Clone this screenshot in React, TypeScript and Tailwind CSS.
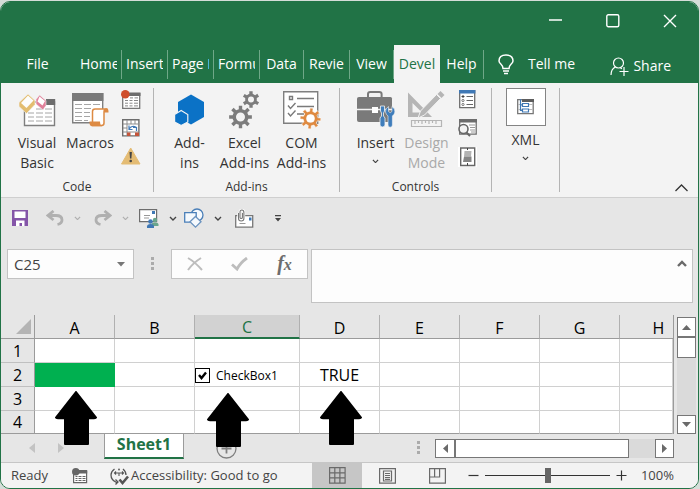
import React, { useState } from "react";
import { clsx } from "clsx";

// label is what is left of the name when the window is this narrow
const TABS = [
  { name: "Home", label: "Home", width: "w-[46px]" },
  { name: "Insert", label: "Insert", width: "w-[46px]" },
  { name: "Page Layout", label: "Page L", width: "w-[46px]" },
  { name: "Formulas", label: "Formu", width: "w-[46px]" },
  { name: "Data", label: "Data", width: "w-[44px]" },
  { name: "Review", label: "Revie", width: "w-[46px]" },
  { name: "View", label: "View", width: "w-[44px]" },
  { name: "Developer", label: "Devel", width: "w-[46px]" },
  { name: "Help", label: "Help", width: "w-[44px]" },
];

const COLUMNS = ["A", "B", "C", "D", "E", "F", "G", "H"];

function Chevron({ color = "#444", size = 8 }: { color?: string; size?: number }) {
  return (
    <svg width={size} height={size / 2 + 1} viewBox="0 0 8 5" fill="none" stroke={color} strokeWidth="1.4">
      <path d="M1 1l3 3 3-3" />
    </svg>
  );
}

function Dots() {
  return (
    <svg width="3" height="14" viewBox="0 0 3 14" fill="#ababab">
      <path d="M0 0h3v3H0zM0 5h3v3H0zM0 10h3v3H0z" />
    </svg>
  );
}

function gearPath(cx: number, cy: number, r: number, hole: number, teeth: number, turn = 0) {
  const inner = r * 0.7;
  const step = (Math.PI * 2) / teeth;
  const pts: string[] = [];
  for (let i = 0; i < teeth; i++) {
    const a = i * step + turn;
    [
      [inner, -0.27],
      [r, -0.19],
      [r, 0.19],
      [inner, 0.27],
    ].forEach(([rad, k]) => {
      pts.push(
        `${(cx + rad * Math.cos(a + k * step)).toFixed(2)} ${(cy + rad * Math.sin(a + k * step)).toFixed(2)}`
      );
    });
  }
  return `M${pts.join("L")}ZM${cx - hole} ${cy}a${hole} ${hole} 0 1 0 ${hole * 2} 0a${hole} ${hole} 0 1 0 ${-hole * 2} 0Z`;
}

/* ---- ribbon icons ---- */

function VisualBasicIcon() {
  return (
    <svg width="37" height="34" viewBox="0 0 37 34">
      <path d="M5.5 9h30v23.5h-30z" fill="#fff" stroke="#7f7f7f" strokeWidth="1.4" />
      <path d="M27 6h9.2v6H27z" fill="#6d6d6d" />
      <path
        d="M9 20h6m2 0h7m2 0h7M9 24h6m2 0h7m2 0h7M9 28h6m2 0h7m2 0h7M17 16h7m2 0h7"
        stroke="#a6a6a6"
        fill="none"
      />
      <path d="M9 1l7 6.5v4L7.5 20.500 0 13.5v-4z" fill="#e3bd6f" stroke="#f3f3f3" strokeWidth=".6" />
      <path d="M9 2.5l5.500 5-7 7.5-5.500-5z" fill="#fdfdfb" />
      <path d="M20.500 2l6.500 5.500v5L24 17l-7-6V6.500z" fill="#e0809a" stroke="#f3f3f3" strokeWidth=".6" />
      <path d="M20.500 3.500L26 8l-2.500 4.500-5-4z" fill="#fff" />
    </svg>
  );
}

function MacrosIcon() {
  return (
    <svg width="37" height="34" viewBox="0 0 37 34">
      <path d="M.7.7h30v29H.7z" fill="#fff" stroke="#7f7f7f" strokeWidth="1.4" />
      <path d="M0 0h31.4v8H0z" fill="#7a7a7a" />
      <path
        d="M3 11.500h7m2 0h7m2 0h7M3 15.500h7m2 0h7M3 19.500h7m2 0h6M3 23.500h7m2 0h6M3 27.500h7m2 0h4"
        stroke="#a6a6a6"
        fill="none"
      />
      <path d="M20.500 29V18.500q0-2.500 2.500-2.500h11q-2 .5-2 3v11q0 2.500-2.500 2.500H20" fill="#fff" stroke="#dd8a43" strokeWidth="1.5" />
      <path d="M32 19.500v-2q.5-2.500 2.500-2.500t2 4.500z" fill="#dd8a43" />
      <path d="M17.500 28.500H28q0 4 2.500 4.700H20q-2.700 0-2.500-4.700z" fill="#dd8a43" />
    </svg>
  );
}

function RecordIcon() {
  return (
    <svg width="20" height="19" viewBox="0 0 20 19">
      <path d="M1.7 3.700h17v14.600h-17z" fill="#fff" stroke="#777" strokeWidth="1.3" />
      <path d="M8 2.500h11.500v3.500H8z" fill="#6d6d6d" />
      <path d="M4 10.500h3m1.500 0h3m1.500 0h4M4 13.200h3m1.500 0h3m1.500 0h4M4 15.900h3m1.500 0h3m1.500 0h4M9 7.900h3m1.500 0h3.500" stroke="#888" />
      <circle cx="4.3" cy="4.3" r="4.3" fill="#cf4f2c" />
    </svg>
  );
}

function RelativeIcon() {
  return (
    <svg width="18" height="18" viewBox="0 0 18 18">
      <path d="M.7.7h16.200v16.200H.7z" fill="#fff" stroke="#6d6d6d" strokeWidth="1.4" />
      <path d="M5 1v16M9 1v4M13 1v4M1 5h16M1 9h4M1 13h16" stroke="#8d8d8d" />
      <path d="M5 13.500h3.500V17H5zM13 13.500h4V17h-4z" fill="#c4553b" />
      <path d="M7 10q3-4.500 7.500-1.500M7 6.500V10.500h3.500M14.500 12V8.500H11" fill="none" stroke="#3f78b5" strokeWidth="1.2" />
    </svg>
  );
}

function WarningIcon() {
  return (
    <svg width="20" height="18" viewBox="0 0 20 18">
      <path d="M9.700 1L19 17H.5z" fill="#e4bc74" stroke="#e4bc74" strokeLinejoin="round" />
      <path d="M8.500 5h2.400l-.5 6.500H9z" fill="#444" />
      <circle cx="9.7" cy="14" r="1.3" fill="#444" />
    </svg>
  );
}

function AddinsIcon() {
  return (
    <svg width="31" height="32" viewBox="0 0 31 32" fill="#0b72c6">
      <path d="M17 .5l13 7.400v15L17 30.500 4 22.900v-15z" />
      <path d="M7.200 16.500l6.600 4v7.500l-6.600 3.500-6.600-3.500v-7.500z" stroke="#f3f3f3" strokeWidth="1.2" />
    </svg>
  );
}

function GearsIcon() {
  return (
    <svg width="31" height="38" viewBox="0 0 31 38" fill="#7c7c7c" fillRule="evenodd">
      <path d={gearPath(22, 8.5, 8.5, 3, 6, 0.52)} />
      <path d={gearPath(11.5, 26, 11.5, 4.5, 8)} />
    </svg>
  );
}

function ComIcon() {
  return (
    <svg width="38" height="38" viewBox="0 0 38 38">
      <path d="M.7.7h34v31.500H.7z" fill="#fff" stroke="#7f7f7f" strokeWidth="1.4" />
      <path
        d="M6.500 5.500h3v3h-3zM14 7.500h17M14 15.500h17M14 23h7M5 14.500l2.500 3 5-5.500M5 22l2.500 3 5-5.500"
        fill="none"
        stroke="#7a7a7a"
        strokeWidth="1.4"
      />
      <path d={gearPath(27.5, 27.5, 10.5, 4, 8, 0.1)} fill="#df8a41" stroke="#fff" strokeWidth=".6" fillRule="evenodd" />
    </svg>
  );
}

function ToolboxIcon() {
  return (
    <svg width="38" height="37" viewBox="0 0 38 37">
      <path d="M11 6V3q0-2 2.300-2h9Q24.600 1 24.600 3v3" fill="none" stroke="#7a7a7a" strokeWidth="2" />
      <path d="M2 6h31.500q1.500 0 1.500 1.500V29q0 2-2 2H2q-2 0-2-2V7.500Q0 6 2 6z" fill="#7a7a7a" />
      <path d="M0 18.500h35" stroke="#f3f3f3" strokeWidth="1.3" />
      <path d="M15 16h6v6h-6z" fill="#fff" />
      <path d="M23.500 15v5l1 2v3l-1.500 2v7q0 2 2.500 2t2.500-2v-7l-1.500-2v-3l1-2v-5z" fill="#3f7dbb" stroke="#f3f3f3" strokeWidth=".8" />
      <path
        d="M31.500 15.500q-3.500 2-3 5.500.5 2.500 2.500 4v9q0 2.200 2.200 2.200t2.200-2.200v-9q2.200-1.500 2.500-4 .3-3.500-3-5.500v5l-1.700 1.200-1.700-1.200z"
        fill="#3f7dbb"
        stroke="#f3f3f3"
        strokeWidth=".6"
      />
    </svg>
  );
}

function DesignIcon() {
  return (
    <svg width="37" height="37" viewBox="0 0 37 37" fill="#b5b5b5">
      <path d="M0 1.500L24 26H0zM4.500 12v9.500h9.500z" fillRule="evenodd" />
      <path d="M28.500 3.500l4 4L16.500 24l-6.500 3 2.500-7z" stroke="#f3f3f3" strokeWidth="1" />
      <path d="M32.500 0l4 4-3 3-4-4z" />
      <path d="M3.500 29.500h30v6h-30zM7 30v3M10.500 30v2M14 30v3M17.500 30v2M21 30v3M24.500 30v2M28 30v3" fill="none" stroke="#b5b5b5" strokeWidth="1.2" />
    </svg>
  );
}

function PropertiesIcon() {
  return (
    <svg width="17" height="19" viewBox="0 0 17 19">
      <path d="M.7.7h15v17H.7z" fill="#fff" stroke="#6d6d6d" strokeWidth="1.3" />
      <path d="M0 0h16.400v3.500H0z" fill="#3f78b5" />
      <path d="M7.500 6.500H14M7.500 10.500H14M7.500 14.500H14" stroke="#666" />
      <path d="M4 5v3M2.500 6.500h3" stroke="#444" />
      <circle cx="4" cy="10.5" r="1.1" fill="none" stroke="#777" />
      <circle cx="4" cy="14.5" r="1.1" fill="none" stroke="#777" />
    </svg>
  );
}

function ViewCodeIcon() {
  return (
    <svg width="20" height="18" viewBox="0 0 20 18">
      <path d="M1.7.7h16.500v14.500H1.7z" fill="#fff" stroke="#6d6d6d" strokeWidth="1.3" />
      <path d="M1 0h18v3.500H1z" fill="#6d6d6d" />
      <path d="M11 6h6M12 8.500h5M12 11h5M13 13h4" stroke="#999" />
      <circle cx="5.5" cy="10" r="4.5" fill="#f3f3f3" stroke="#666" strokeWidth="1.6" />
      <path d="M8.500 13.500l3.500 3.500" stroke="#666" strokeWidth="2" />
    </svg>
  );
}

function DialogIcon() {
  return (
    <svg width="19" height="20" viewBox="0 0 19 20">
      <path d="M0 0h19v20H0z" fill="#fff" />
      <path d="M2.700 1h14v17.500h-14z" fill="#fff" stroke="#666" strokeWidth="1.4" />
      <path d="M6.500 4h7l-.5 5.500H6z" fill="#b3b3b3" />
      <path d="M6 9.500h7.500v5.500H5z" fill="#858585" />
      <path d="M9.500 1v2M9.500 16v2.500" stroke="#444" />
    </svg>
  );
}

function XmlIcon() {
  return (
    <svg width="17" height="16" viewBox="0 0 17 16">
      <path d="M.7.7h15.500v14H.7z" fill="#fff" stroke="#777" strokeWidth="1.3" />
      <path d="M5 0h12v3H5z" fill="#5d5d5d" />
      <path d="M1 5.500h15M1 10.500h15" stroke="#bbb" />
      <path d="M3.500 0v11.500h2M3.500 6h2" fill="none" stroke="#3f78b5" strokeWidth="1.2" />
      <path d="M5.500 4.500h6v3h-6zM5.500 10h6v3h-6z" fill="#fff" stroke="#3f78b5" strokeWidth="1.2" />
    </svg>
  );
}

function RibbonButton({
  icon,
  lines,
  width,
  disabled,
  menu,
}: {
  icon: React.ReactNode;
  lines: string[];
  width: string;
  disabled?: boolean;
  menu?: boolean;
}) {
  return (
    <button
      disabled={disabled}
      className={clsx("flex flex-col items-center text-sm leading-5", width, disabled && "text-[#a9a9a9]")}
    >
      <span className="mb-0.5 flex h-[43px] items-center justify-center">{icon}</span>
      {lines.map((l) => (
        <span key={l} className="whitespace-nowrap">
          {l}
        </span>
      ))}
      {menu && (
        <span className="flex h-4 items-center">
          <Chevron size={7} />
        </span>
      )}
    </button>
  );
}

function SmallIcons({ items }: { items: { label: string; icon: React.ReactNode }[] }) {
  return (
    <div className="ml-0.5 flex w-6 flex-col items-center gap-2.5 pt-0.5">
      {items.map((i) => (
        <button key={i.label} aria-label={i.label}>
          {i.icon}
        </button>
      ))}
    </div>
  );
}

function RibbonGroup({
  title,
  width,
  children,
}: {
  title?: string;
  width: string;
  children: React.ReactNode;
}) {
  return (
    <section aria-label={title || "XML"} className={clsx("flex flex-col border-r border-[#b4b4b4]", width)}>
      <div className="flex h-[85px] justify-center">{children}</div>
      {title && <p className="pt-[9px] text-center text-xs leading-[10px]">{title}</p>}
    </section>
  );
}

function Ribbon() {
  return (
    <div className="flex border-b border-[#cfcfcf] bg-[#f3f3f3] py-[5px]">
      <RibbonGroup title="Code" width="w-[153px]">
        <RibbonButton icon={<VisualBasicIcon />} lines={["Visual", "Basic"]} width="w-[52px]" />
        <RibbonButton icon={<MacrosIcon />} lines={["Macros"]} width="w-[54px]" />
        <SmallIcons
          items={[
            { label: "Record Macro", icon: <RecordIcon /> },
            { label: "Use Relative References", icon: <RelativeIcon /> },
            { label: "Macro Security", icon: <WarningIcon /> },
          ]}
        />
      </RibbonGroup>
      <RibbonGroup title="Add-ins" width="w-[186px]">
        <RibbonButton icon={<AddinsIcon />} lines={["Add-", "ins"]} width="w-[54px]" />
        <RibbonButton icon={<GearsIcon />} lines={["Excel", "Add-ins"]} width="w-[56px]" />
        <RibbonButton icon={<ComIcon />} lines={["COM", "Add-ins"]} width="w-[58px]" />
      </RibbonGroup>
      <RibbonGroup title="Controls" width="w-[152px]">
        <RibbonButton icon={<ToolboxIcon />} lines={["Insert"]} width="w-[48px]" menu />
        <RibbonButton icon={<DesignIcon />} lines={["Design", "Mode"]} width="w-[54px]" disabled />
        <SmallIcons
          items={[
            { label: "Properties", icon: <PropertiesIcon /> },
            { label: "View Code", icon: <ViewCodeIcon /> },
            { label: "Run Dialog", icon: <DialogIcon /> },
          ]}
        />
      </RibbonGroup>
      <RibbonGroup width="w-[68px]">
        <button className="flex flex-col items-center self-start text-sm leading-5">
          <span className="mb-1 flex h-[38px] w-10 items-center justify-center border border-[#848484] bg-white">
            <XmlIcon />
          </span>
          XML
          <span className="flex h-4 items-center">
            <Chevron size={7} />
          </span>
        </button>
      </RibbonGroup>
      <button aria-label="Collapse the Ribbon" className="mr-2.5 ml-auto self-end">
        <svg width="13" height="8" viewBox="0 0 13 8" fill="none" stroke="#333" strokeWidth="1.3">
          <path d="M.5 7l6-6 6 6" />
        </svg>
      </button>
    </div>
  );
}

function QuickAccess() {
  return (
    <div className="flex h-10 items-center pl-[11px]">
      <button aria-label="Save" className="w-[34px]">
        <svg width="16" height="16" viewBox="0 0 16 16">
          <path d="M0 0h16v16H0z" fill="#8455a8" />
          <path d="M2.500 1.500h11v6.500h-11zM4 10.500h8.500V16H10v-3H7.500v3H4z" fill="#fff" />
        </svg>
      </button>
      <button aria-label="Undo" className="flex w-[48px] items-center gap-2.5" disabled>
        <svg width="18" height="16" viewBox="0 0 18 16" fill="none" stroke="#b0b0b0" strokeWidth="2.8">
          <path d="M7.500 1L2 5.500 7.500 10M2 5.500h8q6 0 6 4.500 0 3.500-4.500 4.500" />
        </svg>
        <Chevron color="#b0b0b0" size={7} />
      </button>
      <button aria-label="Redo" className="flex w-[45px] items-center gap-2.5" disabled>
        <svg width="18" height="16" viewBox="0 0 18 16" fill="none" stroke="#b0b0b0" strokeWidth="2.8">
          <path d="M10.500 1L16 5.500 10.500 10M16 5.500H8q-6 0-6 4.500 0 3.500 4.500 4.500" />
        </svg>
        <Chevron color="#b0b0b0" size={7} />
      </button>
      <button aria-label="Mail" className="flex w-[45px] items-center gap-2.5">
        <svg width="20" height="20" viewBox="0 0 20 20">
          <path d="M.6 1.600h17v12H.6z" fill="#fff" stroke="#6d6d6d" strokeWidth="1.2" />
          <path d="M13 3h3v3h-3z" fill="#3f78b5" />
          <path d="M5 7.500h6M5 10h5" stroke="#999" />
          <circle cx="16" cy="12" r="2.2" fill="#6aa58c" />
          <path d="M12.500 18v-1.500q0-2 3.500-2t3.500 2V18z" fill="#6aa58c" />
          <circle cx="11.5" cy="13.5" r="2.3" fill="#3f78b5" />
          <path d="M8 20v-1.500q0-2.500 3.500-2.500t3.500 2.500V20z" fill="#3f78b5" />
        </svg>
        <Chevron />
      </button>
      <button aria-label="Shapes" className="flex w-[51px] items-center gap-2.5">
        <svg width="20" height="20" viewBox="0 0 20 20" fill="#f5f9fd" stroke="#4a7fb8" strokeWidth="1.3">
          <circle cx="13" cy="7" r="6" />
          <path d="M.7 4.700h11.500v9.500H.7z" />
          <path d="M11.500 8.500l5.500 5.300-5.500 5.300-5.500-5.300z" stroke="#6b93bf" />
        </svg>
        <Chevron />
      </button>
      <button aria-label="Attach" className="w-10">
        <svg width="19" height="19" viewBox="0 0 19 19" fill="none">
          <path d="M.7 6.700h17v11.500H.7z" fill="#fff" stroke="#777" strokeWidth="1.3" />
          <path d="M14 8.500h2.500v3H14z" fill="#3f78b5" />
          <path d="M4.500 14.500h6" stroke="#999" />
          <path d="M3.500 4v5.500q0 2.500 2.700 2.500t2.700-2.500V3.500Q8.900 1 6.900 1T5 3.500v5q0 1 1.200 1t1.200-1V4" stroke="#fff" strokeWidth="2.6" />
          <path d="M3.500 4v5.500q0 2.500 2.700 2.500t2.700-2.500V3.500Q8.900 1 6.900 1T5 3.500v5q0 1 1.200 1t1.200-1V4" stroke="#777" strokeWidth="1.1" />
        </svg>
      </button>
      <button aria-label="Customize Quick Access Toolbar">
        <svg width="6" height="7" viewBox="0 0 6 7" fill="#444">
          <path d="M0 0h6v1.200H0zM0 3h6L3 6.500z" />
        </svg>
      </button>
    </div>
  );
}

function FormulaBar() {
  return (
    <div className="flex items-start pt-[11px] pr-[5px] pb-3 pl-1.5">
      <div className="flex h-[30px] w-[127px] items-center border border-[#c3c3c3] bg-[#fdfdfd] pr-2">
        <input
          aria-label="Name Box"
          defaultValue="C25"
          className="w-full min-w-0 bg-transparent pl-1.5 text-[15px] text-[#444] outline-none"
        />
        <button aria-label="Open names">
          <svg width="8" height="5" viewBox="0 0 8 5" fill="#777">
            <path d="M0 0h8L4 4.500z" />
          </svg>
        </button>
      </div>
      <div className="flex h-[30px] w-[37px] items-center justify-center">
        <Dots />
      </div>
      <div className="mr-[3px] grid h-[30px] w-[137px] grid-cols-3 place-items-center border border-[#c3c3c3] bg-[#fdfdfd]">
        <button aria-label="Cancel">
          <svg width="16" height="14" viewBox="0 0 16 14" fill="none" stroke="#bdbdbd" strokeWidth="2">
            <path d="M1 1q7 4 14 12M14 1Q6 6 1 13" />
          </svg>
        </button>
        <button aria-label="Enter">
          <svg width="17" height="14" viewBox="0 0 17 14" fill="none" stroke="#bdbdbd" strokeWidth="2.8">
            <path d="M1 7.500l5 4.500Q9 6 16 1" />
          </svg>
        </button>
        <button
          aria-label="Insert Function"
          className="font-['Liberation_Serif',serif] text-xl leading-6 font-bold text-[#6d6d6d] italic"
        >
          f<span className="text-base">x</span>
        </button>
      </div>
      <div className="flex h-[54px] flex-1 items-start border border-[#c3c3c3] bg-[#fdfdfd] pr-[5px]">
        <textarea aria-label="Formula Bar" className="h-full flex-1 resize-none p-1 text-sm outline-none" />
        <button aria-label="Collapse Formula Bar" className="mt-2.5">
          <svg width="10" height="7" viewBox="0 0 10 7" fill="none" stroke="#6a6a6a" strokeWidth="2.4">
            <path d="M1 6l4-4 4 4" />
          </svg>
        </button>
      </div>
    </div>
  );
}

function Arrow({ className }: { className: string }) {
  return (
    <svg width="42" height="54" viewBox="0 0 42 54" className={clsx("absolute z-10", className)} fill="#000" stroke="#000" strokeWidth="2" strokeLinejoin="round">
      <path d="M21 1l20 25.500q-1 1-3 .7h-5V53H10V27.200H4q-2 .3-3-.7z" />
    </svg>
  );
}

function Grid() {
  const [checked, setChecked] = useState(true);
  const cell = "border-r border-b border-[#d0d0d0] p-0";
  return (
    <div className="flex pr-0.5">
      <table className="flex-1 table-fixed border-separate border-spacing-0 border-r border-[#9b9b9b] bg-white text-base leading-5 text-black">
        <colgroup>
          <col className="w-[34px]" />
          <col className="w-20" />
          <col className="w-20" />
          <col className="w-[105px]" />
          <col className="w-20" />
          <col className="w-20" />
          <col className="w-20" />
          <col className="w-20" />
          <col />
        </colgroup>
        <thead>
          <tr className="h-6 bg-[#e6e6e6]">
            <th className="border-r border-b border-[#9b9b9b] p-0">
              <svg className="mr-[3px] ml-auto" width="15" height="15" viewBox="0 0 15 15" fill="#b4b4b4">
                <path d="M15 0v15H0z" />
              </svg>
            </th>
            {COLUMNS.map((c) => (
              <th
                key={c}
                className={clsx(
                  "p-0 pt-0.5 font-normal",
                  c === "C"
                    ? "border-r border-b-2 border-r-[#b0b0b0] border-b-[#217346] bg-[#d2d2d2] text-[#217346]"
                    : "border-b border-b-[#9b9b9b]",
                  c === "H" ? "pl-6" : c !== "C" && "border-r border-r-[#b0b0b0]"
                )}
              >
                {c}
              </th>
            ))}
          </tr>
        </thead>
        <tbody>
          {[1, 2, 3, 4].map((row) => (
            <tr key={row} className={row === 4 ? "h-[23px]" : "h-6"}>
              <th
                className={clsx(
                  "border-r border-b border-r-[#9b9b9b] bg-[#e6e6e6] p-0 font-normal",
                  row === 4 ? "border-b-[#9b9b9b]" : "border-b-[#c0c0c0]"
                )}
              >
                {row}
              </th>
              {COLUMNS.map((c) => {
                if (row === 2 && c === "A")
                  return (
                    <td key={c} className="relative bg-[#00b050] p-0">
                      <Arrow className="top-7 left-5" />
                    </td>
                  );
                if (row === 2 && c === "C")
                  return (
                    <td key={c} className={clsx(cell, "relative")}>
                      <label className="flex items-center gap-1.5 pt-0.5 text-xs leading-5">
                        <span className="relative flex">
                          <input
                            type="checkbox"
                            checked={checked}
                            onChange={(e) => setChecked(e.target.checked)}
                            className="size-[15px] appearance-none border border-black bg-white"
                          />
                          {checked && (
                            <svg className="pointer-events-none absolute inset-0" width="15" height="15" viewBox="0 0 15 15" fill="none" stroke="#000" strokeWidth="2.4">
                              <path d="M4 7l2.500 3L11 4.500" />
                            </svg>
                          )}
                        </span>
                        CheckBox1
                      </label>
                      <Arrow className="top-[30px] left-3" />
                    </td>
                  );
                if (row === 2 && c === "D")
                  return (
                    <td key={c} className={clsx(cell, "relative text-center")}>
                      TRUE
                      <Arrow className="top-7 left-5" />
                    </td>
                  );
                return <td key={c} className={clsx(cell, row === 4 && "border-b-[#9b9b9b]")} />;
              })}
            </tr>
          ))}
        </tbody>
      </table>
      <div className="mt-0.5 ml-[3px] flex w-[19px] flex-col bg-[#dadada]">
        <button aria-label="Scroll up" className="flex h-5 items-center justify-center border border-[#777] bg-white">
          <svg width="9" height="5" viewBox="0 0 9 5" fill="#6a6a6a">
            <path d="M0 5h9L4.500 0z" />
          </svg>
        </button>
        <div className="h-[21px] border border-[#777] bg-white" />
        <button
          aria-label="Scroll down"
          className="mt-auto flex h-[19px] items-center justify-center border border-[#777] bg-white"
        >
          <svg width="9" height="5" viewBox="0 0 9 5" fill="#6a6a6a">
            <path d="M0 0h9L4.500 5z" />
          </svg>
        </button>
      </div>
    </div>
  );
}

function SheetTabs() {
  return (
    <div className="flex h-[28px] pr-6 pl-7">
      <button aria-label="Previous sheet" disabled className="w-[29px]">
        <svg width="6" height="10" viewBox="0 0 6 10" fill="#c3c3c3">
          <path d="M6 0v10L0 5z" />
        </svg>
      </button>
      <button aria-label="Next sheet" disabled className="w-[46px]">
        <svg width="6" height="10" viewBox="0 0 6 10" fill="#c3c3c3">
          <path d="M0 0v10l6-5z" />
        </svg>
      </button>
      <button className="h-[25px] w-20 border-x border-b-2 border-x-[#9b9b9b] border-b-[#217346] bg-white pb-1 text-base leading-5 font-bold text-[#217346]">
        Sheet1
      </button>
      <button aria-label="New sheet" className="ml-8">
        <svg width="21" height="21" viewBox="0 0 21 21" fill="none" stroke="#808080" strokeWidth="1.3">
          <circle cx="10.5" cy="10.5" r="9.5" />
          <path d="M10.500 5.500v10M5.500 10.500h10" strokeWidth="1.8" />
        </svg>
      </button>
      <div className="ml-auto flex w-[257px] items-center">
        <Dots />
        <div className="ml-[15px] flex h-[19px] flex-1 bg-[#dadada]">
          <button aria-label="Scroll left" className="flex w-5 items-center justify-center border border-[#777] bg-white">
            <svg width="5" height="9" viewBox="0 0 5 9" fill="#6a6a6a">
              <path d="M5 0v9L0 4.500z" />
            </svg>
          </button>
          <div className="w-[174px] border border-[#777] bg-white" />
          <button
            aria-label="Scroll right"
            className="ml-auto flex w-[19px] items-center justify-center border border-[#777] bg-white"
          >
            <svg width="5" height="9" viewBox="0 0 5 9" fill="#6a6a6a">
              <path d="M0 0v9l5-4.500z" />
            </svg>
          </button>
        </div>
      </div>
    </div>
  );
}

function StatusBar() {
  const [zoom, setZoom] = useState(100);
  return (
    <div className="flex h-[26px] items-center border-t border-[#c6c6c6] bg-[#f3f3f3] pr-6 pl-2.5 text-[13px] text-[#444]">
      <span className="w-[61px]">Ready</span>
      <button aria-label="Record Macro" className="w-[38px]">
        <svg width="16" height="16" viewBox="0 0 16 16">
          <path d="M1.600 3.600h13v11h-13z" fill="#fff" stroke="#666" strokeWidth="1.2" />
          <path d="M7 2h8.200v3.500H7z" fill="#666" />
          <path d="M3.500 8.500h2m1 0h3m1 0h3M3.500 10.500h2m1 0h3m1 0h3M3.500 12.500h2m1 0h3m1 0h3" stroke="#666" />
          <circle cx="3.8" cy="3.8" r="3.8" fill="#666" />
        </svg>
      </button>
      <button className="flex items-center gap-0.5 whitespace-nowrap">
        <svg width="19" height="18" viewBox="0 0 19 18" fill="none" stroke="#555" strokeWidth="1.3">
          <path d="M4.500 2Q1 4.500 1 8q0 5 5.500 7.500L8 15M13 2q3 2.500 3 6M5.500 12.500l2.500 2.500-2.500 2.500" />
          <path d="M4.500 6h9M6 4.500L4.500 6 6 7.500M12 4.500L13.500 6 12 7.500M9 6v3" strokeWidth="1.1" />
          <circle cx="9" cy="2.500" r=".9" fill="#555" strokeWidth="0" />
          <path d="M9.500 12.500l3 3.500 5.500-6.500" strokeWidth="2.6" />
        </svg>
        Accessibility: Good to go
      </button>
      <div className="ml-auto flex h-full items-center">
        <button aria-label="Normal" className="flex h-full w-[50px] items-center justify-center bg-[#c6c6c6]">
          <svg width="17" height="17" viewBox="0 0 17 17" fill="none" stroke="#6a6a6a" strokeWidth="1.2">
            <path d="M.6.6h15.500v15.500H.6zM5.800.6v15.500M10.900.6v15.500M.6 5.800h15.500M.6 10.900h15.500" />
          </svg>
        </button>
        <button aria-label="Page Layout" className="flex w-[50px] justify-center">
          <svg width="17" height="16" viewBox="0 0 17 16" fill="none" stroke="#6a6a6a" strokeWidth="1.2">
            <path d="M.6.6h15.800v14.500H.6zM4.500 3h8v10h-8zM6 5.500h5M6 7.500h5M6 9.500h5M6 11.300h5" />
          </svg>
        </button>
        <button aria-label="Page Break Preview" className="flex w-[50px] justify-center">
          <svg width="17" height="16" viewBox="0 0 17 16" fill="none" stroke="#6a6a6a" strokeWidth="1.2">
            <path d="M.6.6h15.800v14.500H.6zM.6 9h10V.6M5.600.6V9" />
          </svg>
        </button>
        <button aria-label="Zoom out" className="ml-1.5">
          <svg width="11" height="11" viewBox="0 0 11 11" stroke="#333" strokeWidth="1.2">
            <path d="M.5 5.500h10" />
          </svg>
        </button>
        <input
          type="range"
          aria-label="Zoom"
          min={0}
          max={200}
          value={zoom}
          onChange={(e) => setZoom(Number(e.target.value))}
          className="mx-1.5 h-[15px] w-[125px] appearance-none bg-transparent bg-[linear-gradient(#333,#333)] bg-[length:100%_1px] bg-center bg-no-repeat [&::-webkit-slider-thumb]:h-[15px] [&::-webkit-slider-thumb]:w-1.5 [&::-webkit-slider-thumb]:appearance-none [&::-webkit-slider-thumb]:bg-[#666]"
        />
        <button aria-label="Zoom in">
          <svg width="11" height="11" viewBox="0 0 11 11" stroke="#333" strokeWidth="1.2">
            <path d="M.5 5.500h10M5.500.5v10" />
          </svg>
        </button>
        <span className="w-[47px] text-right">{zoom}%</span>
      </div>
    </div>
  );
}

function TitleBar() {
  const win = "flex w-[57px] items-center justify-center";
  return (
    <div className="flex h-[43px] justify-end pb-1.5">
      <button aria-label="Minimize" className={win}>
        <svg width="13" height="13" viewBox="0 0 13 13" stroke="#fff" strokeWidth="1.3">
          <path d="M0 6h13" />
        </svg>
      </button>
      <button aria-label="Maximize" className={win}>
        <svg width="14" height="14" viewBox="0 0 14 14" fill="none" stroke="#fff" strokeWidth="1.4">
          <rect x=".8" y=".8" width="12" height="12" rx="1.5" />
        </svg>
      </button>
      <button aria-label="Close" className={win}>
        <svg width="14" height="14" viewBox="0 0 14 14" stroke="#fff" strokeWidth="1.4">
          <path d="M1 1l12 12M13 1L1 13" />
        </svg>
      </button>
    </div>
  );
}

function TabRow() {
  const [active, setActive] = useState("Developer");
  return (
    <nav className="flex h-[38px] items-stretch text-sm text-white">
      <button className="w-[75px] pr-0.5">File</button>
      {TABS.map((t) => (
        <button
          key={t.name}
          title={t.name}
          onClick={() => setActive(t.name)}
          className={clsx("flex items-center", t.width, active === t.name && "bg-[#f3f3f3] text-[#217346]")}
        >
          <span
            className={clsx(
              "flex h-[29px] w-full items-center px-1",
              active !== t.name && "border-r border-[#6fa888]"
            )}
          >
            <span className="mx-auto overflow-hidden whitespace-nowrap">{t.label}</span>
          </span>
        </button>
      ))}
      <button className="ml-3.5 flex items-center gap-3.5">
        <svg width="16" height="21" viewBox="0 0 16 21" fill="none" stroke="#fff" strokeWidth="1.5">
          <path d="M5 14.500q0-2.500-2-4.300Q1 8.500 1 7q0-6 7-6t7 6q0 1.500-2 3.200-2 1.800-2 4.300zM5 17h6M6 19.500h4" />
        </svg>
        Tell me
      </button>
      <button className="mr-[27px] ml-auto flex items-center gap-1 pt-1">
        <svg width="19" height="19" viewBox="0 0 19 19" fill="none" stroke="#fff" strokeWidth="1.2">
          <circle cx="8.5" cy="6" r="5" />
          <path d="M1 18q0-6 4.500-8M10.500 11l1.500.8M14 10v9M9.500 14.500h9" />
        </svg>
        Share
      </button>
    </nav>
  );
}

export default function App() {
  return (
    <div className="bg-[#d5ddd8] pt-px pr-px font-['Open_Sans','Noto_Sans',sans-serif] text-[#333]">
      <div className="overflow-hidden rounded-[10px] border border-[#217346] bg-[#e6e6e6]">
        <header className="bg-[#217346]">
          <TitleBar />
          <TabRow />
        </header>
        <Ribbon />
        <QuickAccess />
        <FormulaBar />
        <Grid />
        <SheetTabs />
        <StatusBar />
      </div>
    </div>
  );
}
